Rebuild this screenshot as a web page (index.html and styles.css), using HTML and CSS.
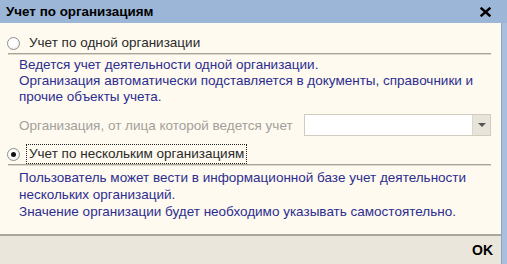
FILE: index.html
```html
<!DOCTYPE html>
<html lang="ru">
<head>
<meta charset="utf-8">
<link rel="stylesheet" href="styles.css">
</head>
<body>
<div class="window">
  <div class="titlebar">
    <span class="title">Учет по организациям</span>
    <svg class="close" width="11" height="10" viewBox="0 0 11 10"><path d="M1.5 1.5 L9.5 8.5 M9.5 1.5 L1.5 8.5" stroke="#000" stroke-width="2.4" stroke-linecap="square"/></svg>
  </div>
  <div class="body">
    <div class="content">
      <div class="option">
        <span class="radio"></span>
        <span class="label">Учет по одной организации</span>
      </div>
      <div class="sep"></div>
      <div class="note">
        Ведется учет деятельности одной организации.<br>
        Организация автоматически подставляется в документы, справочники и прочие объекты учета.
      </div>
      <div class="field">
        <span class="field-label">Организация, от лица которой ведется учет</span>
        <div class="combo">
          <div class="combo-input"></div>
          <div class="combo-btn"><span class="arrow"></span></div>
        </div>
      </div>
      <div class="option option2">
        <span class="radio checked"></span>
        <span class="label focused">Учет по нескольким организациям</span>
      </div>
      <div class="sep"></div>
      <div class="note note2">
        Пользователь может вести в информационной базе учет деятельности нескольких организаций.<br>
        Значение организации будет необходимо указывать самостоятельно.
      </div>
      <div class="footer">
        <span class="ok">OK</span>
      </div>
    </div>
    <div class="edge"></div>
  </div>
</div>
</body>
</html>
```
FILE: styles.css
```css
* { box-sizing: border-box; }
html, body { margin: 0; padding: 0; }
body {
  width: 507px;
  height: 264px;
  overflow: hidden;
  font-family: "Liberation Sans", Arial, sans-serif;
  font-size: 13.5px;
  background: #fefaf0;
}
.window {
  width: 507px;
  height: 264px;
  display: flex;
  flex-direction: column;
}
.titlebar {
  height: 23px;
  flex: none;
  background: #9cb6d7;
  display: flex;
  align-items: center;
  justify-content: space-between;
  padding: 0 16px 0 6px;
}
.title {
  font-weight: bold;
  font-size: 13.4px;
  color: #000;
}
.close { display: block; margin-top: 1px; }
.body {
  flex: 1;
  display: flex;
}
.content {
  flex: 1;
  background: #fefaf0;
  display: flex;
  flex-direction: column;
  padding-top: 10px;
}
.edge {
  width: 6px;
  background: #a9c0dd;
  border-left: 1px solid #8aa3c4;
}
.option {
  height: 20px;
  display: flex;
  align-items: center;
  padding-left: 7px;
  color: #2a2a2a;
}
.radio {
  width: 13px;
  height: 13px;
  border-radius: 50%;
  border: 1px solid #8e8e8e;
  background: radial-gradient(circle at 40% 35%, #ffffff 40%, #e4e4e4 100%);
  margin-right: 9px;
  position: relative;
  flex: none;
}
.radio.checked::after {
  content: "";
  position: absolute;
  left: 3px;
  top: 3px;
  width: 5px;
  height: 5px;
  border-radius: 50%;
  background: #111;
}
.label { line-height: 16px; }
.label.focused {
  outline: 1px dotted #222;
  outline-offset: 1px;
  padding: 0 1px;
  margin-left: -1px;
}
.sep {
  height: 2px;
  margin: 0 10px 0 8px;
  border-top: 1px solid #a8a498;
  border-bottom: 1px solid #dcd8cc;
}
.note {
  color: #2d2d8f;
  line-height: 16px;
  padding: 2px 10px 0 19px;
}
.field {
  display: flex;
  align-items: center;
  margin-top: 9px;
  padding-left: 19px;
  height: 22px;
}
.field-label {
  color: #a3a09a;
  width: 285px;
  flex: none;
}
.combo {
  width: 187px;
  height: 22px;
  display: flex;
  border: 1px solid #d2ccbf;
  background: #fff;
}
.combo-input { flex: 1; }
.combo-btn {
  width: 18px;
  background: #e9e4d9;
  border-left: 1px solid #ddd7cb;
  display: flex;
  align-items: center;
  justify-content: center;
}
.arrow {
  width: 0;
  height: 0;
  border-left: 4px solid transparent;
  border-right: 4px solid transparent;
  border-top: 4px solid #555;
}
.option2 { margin-top: 8px; }
.note2 { padding-top: 3px; line-height: 17px; }
.footer {
  margin-top: auto;
  height: 30px;
  background: #ebe6dc;
  border-top: 2px solid #aaa69b;
  display: flex;
  align-items: center;
  justify-content: flex-end;
  padding-right: 8px;
}
.ok {
  font-weight: bold;
  font-size: 14px;
  color: #000;
}
```
